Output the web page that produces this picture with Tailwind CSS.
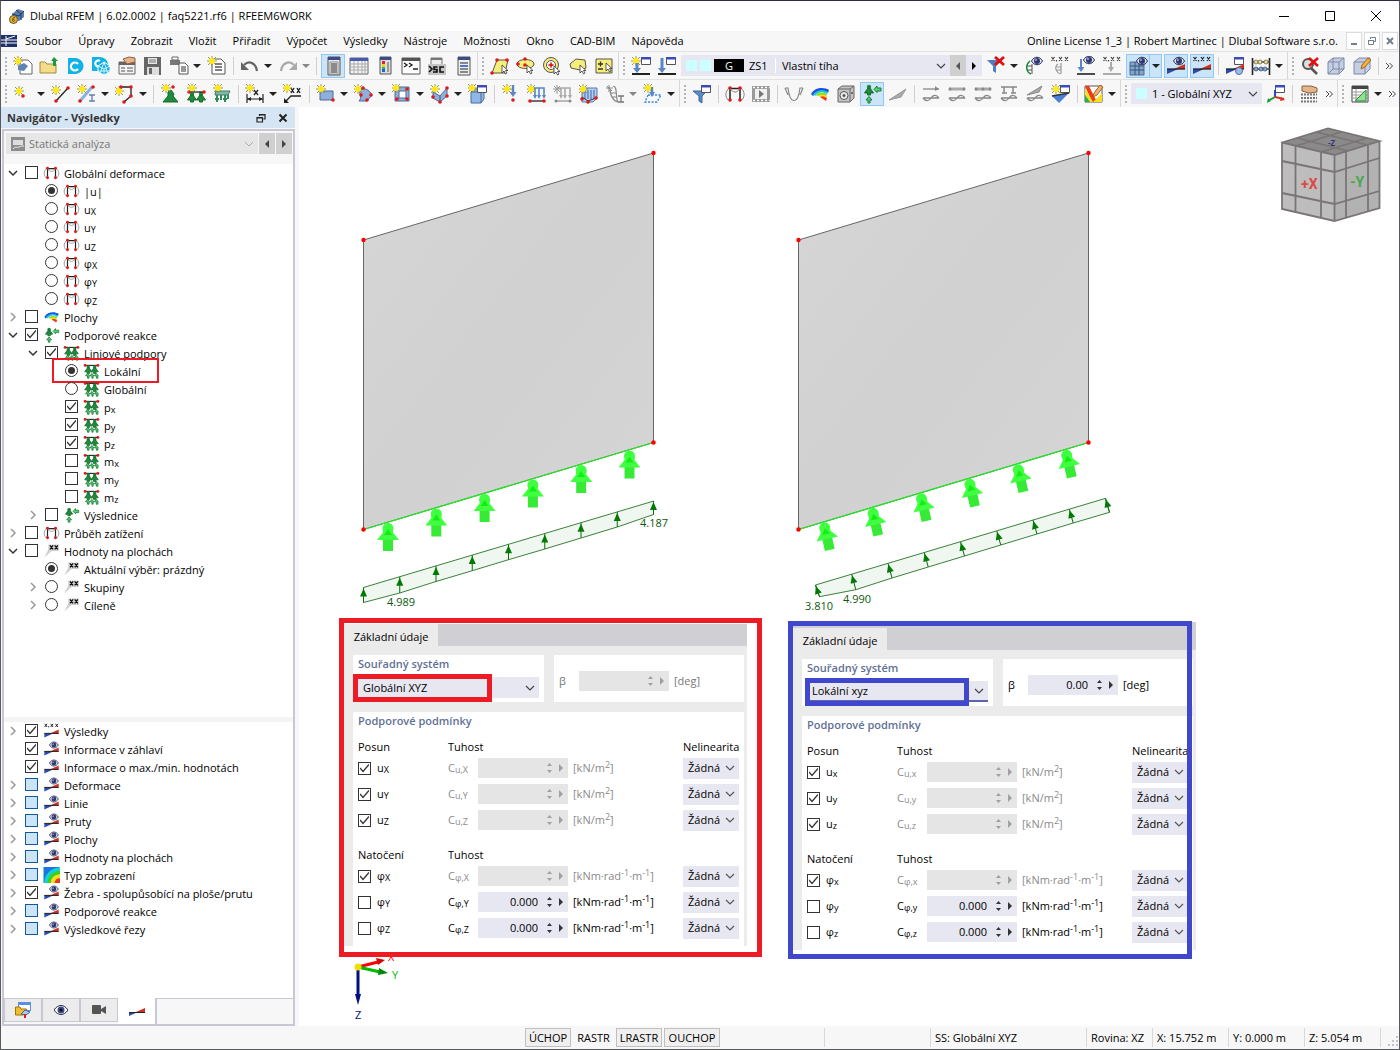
<!DOCTYPE html>
<html lang="cs">
<head>
<meta charset="utf-8">
<title>Dlubal RFEM</title>
<script src="https://cdn.jsdelivr.net/npm/@tailwindcss/browser@4"></script>
</head>
<body class="bg-white">
<div class="flex h-screen flex-col overflow-hidden border border-[#5a5a64] border-t-[#2b2b4a] bg-[#f7f7f7] font-['Open_Sans','Noto_Sans',sans-serif] text-[11px] leading-4 text-black">

  <header class="flex h-[30px] shrink-0 items-center bg-white">
    <svg class="ml-2 h-4 w-4" viewBox="0 0 16 16"><path d="M3 6 9 1l6 2v6l-5 4-6-2z" fill="#5b7fae"/><path d="M3 6l7 2 5-5M7 2l5 4v6" fill="none" stroke="#23395d"/><circle cx="4.500" cy="11.500" r="4" fill="#e3b23c" stroke="#6b5518"/><path d="M6 9.500C3 9 3 13.500 4.500 13.500S6 11 3.500 11.500" fill="none" stroke="#6b4a00"/></svg>
    <h1 class="ml-[5px] text-[11px]">Dlubal RFEM | 6.02.0002 | faq5221.rf6 | RFEEM6WORK</h1>
    <div class="ml-auto flex">
      <button aria-label="Minimalizovat" class="grid w-[46px] place-items-center"><svg class="h-3 w-3" viewBox="0 0 12 12"><path d="M1 6.500h10" stroke="#000"/></svg></button>
      <button aria-label="Maximalizovat" class="grid w-[46px] place-items-center"><svg class="h-3 w-3" viewBox="0 0 12 12"><path d="M1.500 1.500h9v9h-9z" fill="none" stroke="#000"/></svg></button>
      <button aria-label="Zavřít" class="grid w-[46px] place-items-center"><svg class="h-3 w-3" viewBox="0 0 12 12"><path d="m1 1 10 10M11 1 1 11" stroke="#000"/></svg></button>
    </div>
  </header>

  <nav class="flex h-5 shrink-0 items-center">
    <svg class="h-3 w-4" viewBox="0 0 16 12"><path fill="#1f2f6b" d="M0 0h16v12H0z"/><path d="M0 5h16M0 8h16M5 1v10M5 4l9-3" fill="none" stroke="#fff"/></svg>
    <div id="menu" class="ml-2 flex gap-4"></div>
    <span class="ml-auto">Online License 1_3 | Robert Martinec | Dlubal Software s.r.o.</span>
    <div class="ml-2 mr-px flex gap-0.5">
      <button aria-label="Minimalizovat okno" class="grid h-[18px] w-4 place-items-center border border-[#dcdcdc] bg-white"><svg class="h-2.5 w-2.5" viewBox="0 0 10 10"><path d="M2 8h6" stroke="#70808c" stroke-width="2"/></svg></button>
      <button aria-label="Obnovit okno" class="grid h-[18px] w-4 place-items-center border border-[#dcdcdc] bg-white"><svg class="h-2.5 w-2.5" viewBox="0 0 10 10"><path d="M1.500 4.500h5v4h-5zM1 4.500h6M3.500 3V1.500h5v4H7" fill="none" stroke="#70808c"/></svg></button>
      <button aria-label="Zavřít okno" class="grid h-[18px] w-4 place-items-center border border-[#dcdcdc] bg-white"><svg class="h-2.5 w-2.5" viewBox="0 0 10 10"><path d="m2 2 6 6M8 2 2 8" stroke="#70808c" stroke-width="2"/></svg></button>
    </div>
  </nav>

  <div id="bar1" role="toolbar" class="flex h-7 shrink-0 items-center gap-0.5 overflow-hidden border-t border-[#e2e2e2]"></div>
  <div id="bar2" role="toolbar" class="flex h-7 shrink-0 items-center gap-0.5 overflow-hidden border-t border-[#e2e2e2]"></div>

  <div class="flex min-h-0 flex-1">
    <aside class="mr-1 flex w-[294px] shrink-0 flex-col">
      <div class="flex h-[21px] shrink-0 items-center bg-[#d6e5f3] pl-1.5 font-bold text-[#333]">
        <h2>Navigátor - Výsledky</h2>
        <button aria-label="Uvolnit panel" class="ml-auto mr-3"><svg class="h-2.5 w-2.5" viewBox="0 0 10 10"><path d="M1 4.500h5.500V9H1zM1 5h5.500M3.500 3V1.500H9V6H7.500M3 2h6" fill="none" stroke="#222" stroke-width="1.200"/></svg></button>
        <button aria-label="Zavřít panel" class="mr-[7px]"><svg class="h-2.5 w-2.5" viewBox="0 0 10 10"><path d="m1.500 1.500 7 7M8.500 1.500l-7 7" stroke="#222" stroke-width="2"/></svg></button>
      </div>
      <div class="ml-px mt-px flex min-h-0 flex-1 flex-col border-2 border-[#c8c8d4] bg-white">
        <div class="flex h-[33px] shrink-0 items-start gap-px bg-[#f7f7f7] pl-0.5 pr-px pt-0.5 text-[#777]">
          <div class="flex h-[21px] flex-1 items-center bg-[#e6e6e6] px-[5px]">
            <svg class="h-3.5 w-3.5" viewBox="0 0 14 14"><path fill="#8c8c8c" d="M0 0h14v14H0z"/><path fill="#ddd" d="M2 3h10v5H2z"/><path d="M2 12c2-3 4-1 6-2s3-1 5-1" fill="none" stroke="#eee"/></svg>
            <select aria-label="Typ analýzy" disabled class="ml-1 flex-1 appearance-none bg-transparent text-[#777] opacity-100"><option>Statická analýza</option></select>
            <svg class="h-2 w-2" viewBox="0 0 8 8"><path d="m0 2 4 4 4-4" fill="none" stroke="#aaa"/></svg>
          </div>
          <button aria-label="Předchozí" class="grid h-[21px] w-4 place-items-center bg-[#d0d0d0]"><svg class="h-2 w-2" viewBox="0 0 8 8"><path d="M6 0v8L2 4z" fill="#444"/></svg></button>
          <button aria-label="Další" class="grid h-[21px] w-4 place-items-center bg-[#d0d0d0]"><svg class="h-2 w-2" viewBox="0 0 8 8"><path d="M2 0v8l4-4z" fill="#444"/></svg></button>
        </div>
        <div id="tree1" role="tree" class="min-h-0 flex-1 overflow-hidden"></div>
        <div class="h-[5px] shrink-0 bg-[#f4f4f4]"></div>
        <div id="tree2" role="tree" class="h-[276px] shrink-0 overflow-hidden"></div>
        <div class="flex h-[26px] shrink-0 bg-[#f7f7f7]">
          <button aria-label="Data" class="grid h-6 w-[38px] place-items-center border border-[#c8c8d4] bg-[#ececec]"><svg class="h-4 w-4" viewBox="0 0 16 16"><path fill="#5b8fe0" d="M3 0h13v9H3z"/><path fill="#fff" d="M4 3h11v5H4z"/><path d="M.5 5V13h8l3-6H6L5 5z" fill="#f2bd2c" stroke="#a67300"/><path d="m6 12 4-4 5 2-4 3z" fill="#a9c9ee" stroke="#46638f"/><path d="M10 12v4" stroke="#e02020" stroke-width="2"/></svg></button>
          <button aria-label="Zobrazit" class="grid h-6 w-[38px] place-items-center border border-[#c8c8d4] bg-[#ececec]"><svg class="h-3 w-3.5" viewBox="0 0 14 12"><path d="M0 6c4-6 10-6 14 0-4 6-10 6-14 0z" fill="#fff" stroke="#23284c"/><circle cx="7" cy="6" r="3.500" fill="#3e4a86"/><circle cx="7" cy="6" r="1.500" fill="#111"/></svg></button>
          <button aria-label="Pohledy" class="grid h-6 w-[38px] place-items-center border border-[#c8c8d4] bg-[#ececec]"><svg class="h-3 w-4" viewBox="0 0 16 12"><rect y="1" x="1" width="9" height="9" rx="1" fill="#555"/><path d="m10 5 5-3v8l-5-3z" fill="#555"/></svg></button>
          <button aria-label="Výsledky" class="grid h-[26px] w-[39px] place-items-center border-r-2 border-[#c8c8d4] bg-white"><svg class="h-3 w-4" viewBox="0 0 16 12"><path d="M0 7h9L0 11z" fill="#2a4bb5"/><path d="M16 3v4H7z" fill="#d23020"/><path d="M0 7.500h16" stroke="#222"/></svg></button>
          <div class="flex-1 border-t border-[#c8c8d4]"></div>
        </div>
      </div>
    </aside>

    <main id="canvas" class="relative min-w-0 flex-1 overflow-hidden bg-white"></main>
  </div>

  <footer class="flex h-[23px] shrink-0 items-center whitespace-nowrap">
    <div class="ml-[524px] flex items-center gap-0.5">
      <button class="h-[19px] w-[46px] border border-[#c0c0c0] bg-[#efefef]">ÚCHOP</button>
      <button class="h-[19px] w-[41px]">RASTR</button>
      <button class="h-[19px] w-[46px] border border-[#c0c0c0] bg-[#efefef]">LRASTR</button>
      <button class="h-[19px] w-[56px] border border-[#c0c0c0] bg-[#efefef]">OUCHOP</button>
    </div>
    <div class="ml-auto flex leading-[19px]">
      <span class="w-[106px] border-l border-[#d8d8d8]"></span>
      <span class="w-[156px] border-l border-[#d8d8d8] pl-1">SS: Globální XYZ</span>
      <span class="w-[66px] border-l border-[#d8d8d8] pl-1">Rovina: XZ</span>
      <span class="w-[76px] border-l border-[#d8d8d8] pl-1">X: 15.752 m</span>
      <span class="w-[76px] border-l border-[#d8d8d8] pl-1">Y: 0.000 m</span>
      <span class="w-[76px] border-l border-[#d8d8d8] pl-1">Z: 5.054 m</span>
      <span class="grid w-[19px] items-end justify-end border-l border-[#d8d8d8]"><svg class="h-3 w-3" viewBox="0 0 12 12"><path d="M9 9h2v2H9zM5 9h2v2H5zM1 9h2v2H1zM9 5h2v2H9zM5 5h2v2H5zM9 1h2v2H9z" fill="#c4c4c4"/></svg></span>
    </div>
  </footer>
</div>

<script>
const $ = id => document.getElementById(id);

/* Shared glyph parts */
const star = (x, y) => `<g transform="translate(${x} ${y})"><path d="M0-5V5M-5 0H5M-4-4 4 4M4-4-4 4" stroke="#8f8a3c" stroke-width=".9"/><circle r="3" fill="#ffe81a"/></g>`;
const dot = (...p) => { let s = ''; for (let i = 0; i < p.length; i += 2) s += `<circle cx="${p[i]}" cy="${p[i+1]}" r="1.800" fill="#e01818"/>`; return s; };
const gdot = (...p) => { let s = ''; for (let i = 0; i < p.length; i += 2) s += `<circle cx="${p[i]}" cy="${p[i+1]}" r="1.500" fill="#888"/>`; return s; };
const eye = (x, y) => `<g transform="translate(${x} ${y})"><path d="M-5.500 0C-3-5 3-5 5.500 0 3 5-3 5-5.500 0z" fill="#dfe3f2" stroke="#23284c"/><circle r="3" fill="#2c3870"/><circle cx="-1" cy="-1" r="1" fill="#9fb0e0"/></g>`;
const win = (x, y) => `<g transform="translate(${x} ${y})"><path d="M.5.500h9v7h-9z" fill="#fff" stroke="#555"/><path d="M0 0h10v2.500H0z" fill="#3b4cb8"/></g>`;
const line = (d, c = '#222', w = 1.3) => `<path d="${d}" fill="none" stroke="${c}" stroke-width="${w}"/>`;
const fill = (d, c, s = 'none') => `<path d="${d}" fill="${c}" stroke="${s}"/>`;
const xmarks = (y, c = '#222') => `<path d="m1.500 ${y} 3 4M4.500 ${y}l-3 4M9 ${y}l3 4M12 ${y}l-3 4M15 ${y}l3 4M18 ${y}l-3 4M6.500 ${y+3}v1.500" fill="none" stroke="${c}" stroke-width="1.200"/>`;
const post = (x, y) => `<circle cx="${x}" cy="${y+1}" r="2.200" fill="#1f8a3c"/>` + fill(`M${x-1} ${y+2}h2l3.500 5H${x+1.5}v2h-3v-2H${x-4.5}z`, '#1f8a3c', '#146a2c');
const diagram = fill('M1 13h11L1 18z', '#2a4bb5') + fill('M19 8v5H8z', '#d23020') + line('M1 13h18');
const cursor = (x, y) => `<path transform="translate(${x} ${y})" d="M0 0v8l2-2 1.500 3 1.500-1-1.500-2.500H6z" fill="#fff" stroke="#333" stroke-width=".8"/>`;
const blueSurf = d => fill(d, '#8fb0dc', '#4d6b96');
const rainbow = fill('M1 10C5 3 14 3 19 6l-1 3C12 5 7 7 3 12z', '#1d4fe0') + fill('M3 10c4-4 10-5 15-2l-1 2C12 7 8 8 5 12z', '#18c8e0') + fill('M6 11c3-3 7-3 11-1l-1 3-4-2-5 1z', '#8be020') + fill('M8 12c3-2 6-1 9 0l-1 2-5-1z', '#f5e020') + fill('M10 13c3-1 5 0 7 1l-1 3z', '#ef3a1a');

const icons = {
  new: fill('M7 4h8l4 4v10H7z', '#fff', '#666') + star(5, 5) + fill('m5 10 6-3 4 3-4 5-6-1z', '#5f83b5'),
  open: fill('M1 6h5l2 2h9v9H1z', '#f3dd8b', '#a08a3a') + fill('M15 1l4 4h-2v5h-3V5h-2z', '#1d9a3a'),
  c: fill('M3 2h8c10 2 10 14 0 16H3z', '#11b3e6') + line('M13 8a4 4 0 1 0 0 5', '#fff', 2.2),
  cglobe: fill('M1 1h8c6 1 8 4 8 8l-6 6H1z', '#11b3e6') + line('M9 5a3 3 0 1 0 0 5', '#fff', 2) + fill('m7 10 6-4 6 4v6l-6 3-6-3z', '#11b3e6', '#fff') + line('m7 10 6 3 6-3M13 13v6M9 18l4-12 4 12M7 15h12', '#fff', .8),
  props: fill('M2 6h16v12H2z', '#f4f4f4', '#666') + fill('M2 6h16v3H2z', '#666') + line('M4 12h4M10 12h6M4 15h4M10 15h6', '#888') + fill('M6 3l6-2 6 1v4l-8 2z', '#e4b48c', '#8c623c'),
  save: fill('M1 1h17v18H1z', '#666') + fill('M5 2h9v6H5z', '#e8e8e8') + fill('M4 11h12v8H4z', '#ddd') + fill('M6 12h3v6H6z', '#666') + line('M6 4h7M6 6h7', '#999'),
  print: fill('M1 4h10v5H1z', '#777') + fill('M3 1h6v3H3z', '#fff', '#666') + fill('M10 7h6l3 3v8h-9z', '#fff', '#555') + line('M12 11h5M12 13h5M12 15h5', '#777'),
  list: fill('M5 3h9l4 4v11H5z', '#fff', '#555') + line('M8 8h7M8 11h7M8 14h7', '#555') + star(5, 5),
  undo: line('M4 9c5-5 12-2 13 6', '#666', 2.2) + fill('M1 6v8h8z', '#666'),
  redo: line('M16 9C11 4 4 7 3 15', '#aaa', 2.2) + fill('M19 6v8h-8z', '#aaa'),
  panel: fill('M5 1h12v18H5z', '#e8e8e8', '#555') + fill('M5 1h12v3H5z', '#3e4a8a') + fill('M7 6h8v12H7z', '#fff', '#888') + line('M8 8h6M8 10h6M8 12h6M8 14h6M8 16h6', '#666'),
  grid: fill('M1 2h18v16H1z', '#f4f4f4', '#666') + fill('M1 2h18v3H1z', '#4a5ab0') + line('M1 8h18M1 11h18M1 14h18M5 5v13M9 5v13M13 5v13M16 5v13', '#aaa', 1),
  colors: fill('M5 1h11v17H5z', '#ddd', '#555') + fill('M5 1h11v3H5z', '#3e4a8a') + fill('M7 5h3v3H7z', '#e02020') + fill('M7 8h3v3H7z', '#f0d020') + fill('M7 11h3v2H7z', '#20c040') + fill('M7 13h3v3H7z', '#2060e0') + line('M13 6v10', '#777'),
  console: fill('M1 2h18v16H1z', '#fff', '#555') + fill('M1 2h18v3H1z', '#555') + line('m3 7 3 2-3 2M8 7l3 2-3 2M12 13h5', '#222', 1.4),
  sc: fill('M4 2h11v7H4z', '#eee', '#777') + fill('M4 2h11v2H4z', '#777') + fill('M1 8h18v11H1z', '#c4c4c4') + line('m2 10 3 3-3 3M10.500 11H7v2.500h3V16H6M17 11h-4v5h4', '#111', 1.6),
  listwin: fill('M5 1h12v18H5z', '#eee', '#555') + fill('M5 1h12v3H5z', '#3e4a8a') + line('M7 7h8M7 13h8M7 16h8', '#666') + line('M7 10h8', '#4a78d0', 2),
  selpoly: fill('M2 17 7 4h11l-3 13z', '#f7ee7a', '#555') + dot(7, 4, 17, 4, 2, 17) + cursor(12, 9),
  selell: fill('M1 8c0-6 17-6 17 0s-17 6-17 0z', '#f7ee7a', '#555') + dot(9, 3, 2, 8, 9, 9) + cursor(11, 9),
  selcirc: '<circle cx="9" cy="9" r="7.500" fill="#f7ee7a" stroke="#555"/><circle cx="9" cy="9" r="4.500" fill="#fff" stroke="#555"/>' + dot(9, 9) + line('M9 6v6M6 9h6', '#e01818', 1) + cursor(12, 10),
  selfree: fill('M2 8 8 3l9 1 1 8-6 2-9-2z', '#f7ee7a', '#555') + cursor(12, 9),
  selpm: fill('M2 3h16v14H2z', '#f7ee7a', '#555') + line('M4 8h5M6.500 5.500v5M4 13h5', '#333') + cursor(12, 7),
  loadnew: win(10, 1) + star(5, 5) + line('M6 7v8', '#5a86c8', 3) + fill('M2 12h8l-4 5z', '#5a86c8') + line('M1 18h18', '#222', 2),
  load: win(9, 1) + line('M5 2v11', '#5a86c8', 3) + fill('M1 12h8l-4 5z', '#5a86c8') + line('M1 18h18', '#222', 2),
  filterx: fill('M1 4h14l-5 6v7l-3-2v-5z', '#4d7fc0') + line('m9 1 9 8M18 1 9 9', '#e01010', 2.8),
  eyecurve: eye(13, 5) + line('M6 5c-5 4-4 11 1 13', '#1a8a3a', 1.6) + line('M8 8v10M3 10h5M3 14h5', '#555', 1),
  xxxcurve: xmarks(1, '#444') + line('M8 8c-4 3-2 8 2 10M11 7v11M7 11h4M7 14h4', '#999', 1.2),
  loadeye: eye(13, 4) + line('M5 3v10', '#5a86c8', 2) + fill('M1.500 11h7l-3.500 5z', '#5a86c8') + line('M1 18h18', '#222', 1.6),
  xxxload: xmarks(1, '#444') + line('M9 6v6', '#aaa', 2) + fill('M6 11h6l-3 5z', '#aaa') + line('M1 18h18', '#999', 1.6),
  grideye: fill('M2 6h14v13H2z', '#86a6c8', '#4d6b96') + line('M2 10h14M2 14h14M7 6v13M11 6v13', '#34577f', 1) + eye(14, 5),
  diageye: diagram + eye(13, 5),
  diagxxx: xmarks(1) + diagram,
  diagwin: win(9, 1) + diagram + '<circle cx="14" cy="15" r="3.500" fill="#9db9e8" stroke="#5572b8"/>',
  abacus: line('M1.500 2v17M18.500 2v17', '#222', 1.6) + line('M1 6h18M1 13h18', '#444') + '<g fill="#f2e08a" stroke="#555" stroke-width=".7"><circle cx="5" cy="6" r="2"/><circle cx="9" cy="6" r="2"/><circle cx="15" cy="6" r="2"/></g><g fill="#7fa5e0" stroke="#345" stroke-width=".7"><circle cx="5" cy="13" r="2"/><circle cx="10" cy="13" r="2"/><circle cx="14" cy="13" r="2"/></g>',
  findx: '<circle cx="8" cy="8" r="5" fill="#ddd" stroke="#555" stroke-width="2"/>' + line('m11 12 6 6', '#555', 2.6) + line('m9 2 9 8M18 2 9 10', '#e01010', 2.6),
  cube: fill('M2 6l5-4h11v11l-5 5H2z', '#c6cfe2', '#7c88a8') + line('M2 6h11v12M13 6l5-4M7 2v11h11M7 13l-5 5', '#7c88a8', 1),
  cubepen: fill('M2 6l5-4h11v11l-5 5H2z', '#c6cfe2', '#7c88a8') + line('M2 6h11v12M13 6l5-4', '#7c88a8', 1) + fill('m9 13 1-4 6-7 3 2-6 7z', '#f2b040', '#a06a20'),

  node: star(6, 7) + dot(10, 12),
  line: line('M5 17 17 4') + star(5, 6) + dot(5, 17, 17, 4),
  member: line('M3 17 15 3', '#8fb0dc', 3) + star(5, 5) + dot(3, 17, 16, 3) + line('M12 11h6M15 11v6M12 17h6', '#667fa8', 1.4),
  poly: line('M5 3h11v9l-7 6') + star(4, 7) + dot(6, 3, 16, 3, 16, 12, 9, 18),
  supp1: fill('M11 6l3 4-1 2 5 6H3l5-6V8z', '#1f8a3c', '#146a2c') + star(6, 4) + dot(13, 3),
  supp2: post(6, 9) + post(15, 9) + line('M3 8h15') + dot(3, 8, 18, 8) + star(6, 4),
  supp3: fill('M4 7h14l-2 4H3z', '#7fb8a8', '#3d7a68') + line('M5 11v7M9 11v5M13 11v7M16 11v4M3 15h4M11 15h4', '#2f8a5c', 2) + star(6, 4),
  dim: line('M2 10v9M18 10v9M2 15h16', '#222', 1.2) + fill('M2 15l4-2v4zM18 15l-4-2v4z', '#222') + line('m9 6 4 5M13 6l-4 5') + star(5, 4),
  xx: line('M18 12H8L2 18') + fill('M1 19v-5l5 5z', '#222') + line('m8 4 3 5M11 4 8 9M14 4l3 5M17 4l-3 5', '#222', 1.4) + star(4, 4),
  surf: blueSurf('M4 7h13v9H4z') + star(5, 5) + dot(17, 16),
  surf2: blueSurf('M5 6c4-3 10-1 13 5l-5 6H5c3-3 1-7 0-11z') + star(4, 5) + dot(9, 4, 17, 11, 13, 16, 7, 11),
  opening: fill('M3 3h14v14H3z', '#8fb0dc', '#4d6b96') + fill('M7 7h7v7H7z', '#fff', '#4d6b96') + star(4, 4) + dot(15, 5, 5, 15, 15, 15),
  solid: blueSurf('M3 8l7 4 7-8v8l-7 6-7-4z') + line('M10 12v6', '#4d6b96') + star(5, 5) + dot(17, 4, 17, 12, 10, 18, 3, 13),
  solidwin: fill('M3 8l3-3h10v10l-3 4H3z', '#8fb8e8', '#4d6b96') + line('M3 8h10v11M13 8l3-3', '#4d6b96', 1) + win(9, 1) + star(4, 4),
  nload: star(6, 5) + line('M12 1v8', '#5a86c8', 2.4) + fill('M8.500 8h7L12 13z', '#5a86c8') + dot(12, 16),
  lload: line('M4 4h13v8M8 4v8M12 4v8', '#5a86c8', 1.6) + fill('M6 11h4l-2 4zM10 11h4l-2 4zM15 11h4l-2 4z', '#5a86c8') + star(4, 5) + line('M3 17h14') + dot(3, 17, 17, 17),
  lload2: line('M4 4h13v8M8 4v8M12 4v8', '#aaa', 1.6) + fill('M6 11h4l-2 4zM10 11h4l-2 4zM15 11h4l-2 4z', '#aaa') + line('M4 1v9M0 5h8M1 2l6 6M7 2 1 8', '#999', 1) + line('M3 17h14', '#999') + gdot(3, 17, 17, 17),
  sload: fill('M3 8l3-4h12v10l-4 4H3z', '#b7cdea', '#5a78a8') + line('M6 6v9M9 6v9M12 6v9M15 6v9', '#5a86c8', 1.4) + star(4, 5) + line('M3 13l6 4 8-3', '#333', 1) + dot(3, 15, 9, 18, 17, 14),
  sec: line('M8 2c5 0 2 11 5 16M5 5c0 6 3 12 8 13M6 9h5M7 13h5', '#888', 1.2) + line('M4 1v7M1 4h7M2 2l5 5', '#888', 1) + line('M13 12h6M16 12v6M13 18h6', '#777', 1.3),
  free: '<path d="M5 11h13l-4 7H2z" fill="none" stroke="#2f8ae0" stroke-width="1.400" stroke-dasharray="2 1.500"/>' + line('M9 3v6', '#5a86c8', 2.4) + fill('M6 8h6l-3 5z', '#5a86c8') + star(5, 4),
  funnel: fill('M1 7h14l-5 5v7l-3-2v-5z', '#5a8ac8', '#3d66a0') + win(9, 1),
  defo: line('M5 4.500h10M5 4v12M15 4v12', '#222', 1.5) + line('M5 5c4 4 6 4 10 0M4 4C0 8 0 12 3 16M16 4c4 4 4 8 1 12', '#888', 1) + dot(5, 4, 15, 4, 5, 16, 15, 16),
  film: fill('M1 2h18v16H1z', '#999') + fill('M4 5h12v10H4z', '#f0f0f0') + fill('m8 6 5 4-5 4z', '#777') + '<path d="M2 3.500h17M2 16.500h17" stroke="#fff" stroke-width="1.500" stroke-dasharray="2 2"/>',
  curve: line('M1 4h3c2 17 10 17 12 0h3M1 4l3 7M19 4l-3 7', '#888', 1.2),
  rainbow,
  die: fill('M2 5l4-3h12v12l-4 4H2z', '#c4c4c4', '#666') + line('M2 5h12v13M14 5l4-3', '#666', 1) + '<circle cx="8" cy="11.500" r="4" fill="#eee" stroke="#555"/><circle cx="8" cy="11.500" r="1.500" fill="#555"/><circle cx="16" cy="9" r="1" fill="#555"/>',
  react: post(7, 2) + fill('M19 4h-4V2l-3 3.500 3 3V7h4z', '#4fd472', '#1b7a35') + fill('M6 19v-3H4l3-3.500 3 3.500H8v3z', '#4fd472', '#1b7a35'),
  wedge: fill('M1 16 18 5l-5 8z', '#aaa', '#999'),
  r1: line('M2 5h16', '#888', 1.3) + fill('M14 2l4 3-4 2z', '#888') + line('M2 14h16M2 14c3 4 6 3 8 0s5-4 8 0', '#888'),
  r2: line('M2 5h16', '#aaa', 3) + gdot(3, 5, 17, 5) + line('M2 14h16M2 14c3 4 6 3 8 0s5-4 8 0', '#888'),
  r3: line('M2 5h16', '#aaa', 3) + gdot(3, 5, 10, 5, 17, 5) + line('M2 14h16M2 14c3 4 6 3 8 0s5-4 8 0', '#888'),
  r4: line('M2 3h16M5 3v6M14 3v6M3 9h5M12 9h5', '#888', 1.5) + line('M2 14h16M2 14c3 4 6 3 8 0s5-4 8 0', '#888'),
  r5: fill('M2 11 17 2l-3 6z', '#aaa', '#888') + line('M2 14h16M2 14c3 4 6 3 8 0s5-4 8 0', '#888'),
  starwin: win(9, 1) + star(5, 5) + fill('M1 12 18 9 8 19z', '#4d7fd8') + line('M1 12 18 9', '#333'),
  pens: fill('M1 2h17v16H1z', '#fff', '#555') + fill('M1 2h4l8 16H8z', '#ef3a1a') + fill('M1 4l8 14H5L1 11z', '#f5e020') + fill('M1 11l5 7H1z', '#22b14c') + fill('M9 13l1-4 6-8 3 2-6 8z', '#f2b070', '#a06a20') + fill('M9 18l9-9v9z', '#f5e020'),
  axes: win(9, 1) + line('M9 13V6', '#2a4bb5', 2) + line('M9 13l9 2', '#e03020', 2) + line('M9 13l-7 4', '#1d9a3a', 2) + fill('M1 19l1-5 3 3z', '#1d9a3a') + fill('M19 16l-4-3-1 4z', '#e03020'),
  hand: fill('M3 2h9l6 2v4l-8 1-7-2z', '#e4b48c', '#8c623c') + '<path d="M2 10.500h16M2 14h16M2 17.500h16" stroke="#777" stroke-width="2" stroke-dasharray="2 1"/>',
  table: fill('M2 2h16v16H2z', '#fff', '#444') + fill('M2 2h16v3H2z', '#444') + line('M2 8h16M2 11h16M2 14h16M6 5v13', '#999', 1) + fill('M5 17 16 6v11z', '#8fe08f', '#2a8a3a'),

  /* navigator tree */
  linesupp: line('M2 3h16', '#222', 1.4) + post(6, 4) + post(14, 4) + fill('M5 19v-3H2.500L5 13l2.500 3H7v3zM10.500 19v-3H8l2.500-3 2.500 3h-1v3zM16 19v-3h-2.500l2.500-3 2.500 3H18v3z', '#4fd472', '#1b7a35') + dot(2, 3, 18, 3),
  flag: fill('M6 2h13v8H10l-9 8 5-10z', '#cfcfcf') + line('m8 3 4 5M12 3 8 8M14 3l4 5M18 3l-4 5', '#111', 1.6),
  heat: fill('M0 0h20v20H0z', '#1878e0') + '<circle cx="20" cy="20" r="19" fill="#18d0d8"/><circle cx="20" cy="20" r="15" fill="#3ad020"/><circle cx="20" cy="20" r="11" fill="#f5e020"/><circle cx="20" cy="20" r="6" fill="#e83a1a"/>',
};
const svg20 = n => `<svg class="h-5 w-5" viewBox="0 0 20 20">${icons[n]}</svg>`;
const svg16 = n => `<svg class="h-4 w-[17px] shrink-0 overflow-hidden" viewBox="0 0 20 20">${icons[n]}</svg>`;

/* Toolbars: "|" separator, "v" caret, ":" handle, ">>" overflow, "*name" pressed */
const chevron = c => `<svg class="pointer-events-none col-start-1 row-start-1 mr-1 h-2.5 w-2.5 justify-self-end" viewBox="0 0 10 10"><path d="m1 3 4 4 4-4" fill="none" stroke="${c}" stroke-width="1.200"/></svg>`;
const loadCombo = `<div class="flex h-[21px] w-[301px] shrink-0 items-center">
  <div class="flex h-[21px] flex-1 items-center bg-[#e7e7f2] pl-[5px]">
    <span class="h-[11px] w-[11px] bg-[#ccffff]"></span><span class="ml-[3px] h-[11px] w-[11px] bg-[#ccffff]"></span>
    <span class="ml-[3px] h-[13px] w-[30px] bg-black text-center leading-[13px] text-white">G</span>
    <span class="ml-[5px] w-[26px]">ZS1</span><span class="h-[15px] w-px bg-white"></span>
    <span class="grid flex-1 items-center"><select aria-label="Zatěžovací stav" class="col-start-1 row-start-1 appearance-none bg-transparent pl-1.5"><option>Vlastní tíha</option></select>${chevron('#444')}</span>
  </div>
  <button aria-label="Předchozí zatěžovací stav" class="grid h-[21px] w-4 place-items-center bg-[#cfcfcf]"><svg class="h-2 w-2" viewBox="0 0 8 8"><path d="M6 0v8L2 4z" fill="#555"/></svg></button>
  <button aria-label="Další zatěžovací stav" class="grid h-[21px] w-4 place-items-center bg-[#e7e7f2]"><svg class="h-2 w-2" viewBox="0 0 8 8"><path d="M2 0v8l4-4z" fill="#000"/></svg></button>
</div>`;
const csCombo = `<div class="flex h-[21px] w-[131px] shrink-0 items-center bg-[#e7e7f2] pl-[5px]">
  <span class="h-[11px] w-[11px] bg-[#ccffff]"></span>
  <span class="grid flex-1 items-center"><select aria-label="Souřadný systém" class="col-start-1 row-start-1 w-full appearance-none bg-transparent pl-[5px]"><option>1 - Globální XYZ</option></select>${chevron('#444')}</span></div>`;
const tool = t => {
  if (t === '|') return '<span class="grid h-[18px] w-[5px] shrink-0 justify-center"><span class="h-full w-px bg-[#d0d0d0]"></span></span>';
  if (t === 'v' || t === 'vg') return `<button aria-label="Více" class="-ml-0.5 grid h-6 w-3 shrink-0 place-items-center"><svg class="h-1 w-2" viewBox="0 0 8 4"><path d="M0 0h8L4 4z" fill="${t === 'v' ? '#222' : '#888'}"/></svg></button>`;
  if (t === 'V') return '<button aria-label="Více" class="-ml-0.5 grid h-6 w-3 shrink-0 place-items-center border border-l-0 border-[#90c8f6] bg-[#cce4f7]"><svg class="h-1 w-2" viewBox="0 0 8 4"><path d="M0 0h8L4 4z" fill="#222"/></svg></button>';
  if (t === ':' || t === '::') return `<span class="${t === ':' ? 'grid h-7 w-[9px] shrink-0 items-center justify-end border-l border-[#d8d8d8] pr-0.5' : 'grid h-7 w-2 shrink-0 items-center justify-end pr-0.5'}"><svg class="h-[18px] w-0.5" viewBox="0 0 2 18"><path d="M1 0v18" stroke="#b4b4b4" stroke-width="2" stroke-dasharray="2 2"/></svg></span>`;
  if (t === '>>') return '<button aria-label="Další nástroje" class="grid h-6 w-3 shrink-0 place-items-center"><svg class="h-2 w-2" viewBox="0 0 8 8"><path d="m1 1 3 3-3 3M4.500 1l3 3-3 3" fill="none" stroke="#444"/></svg></button>';
  if (t === '@load') return loadCombo;
  if (t === '@cs') return csCombo;
  if (t[0] === '*') return `<button aria-label="${t.slice(1)}" class="grid h-6 w-6 shrink-0 place-items-center border border-[#90c8f6] bg-[#cce4f7]">${svg20(t.slice(1))}</button>`;
  return `<button aria-label="${t}" class="grid h-6 w-6 shrink-0 place-items-center">${svg20(t)}</button>`;
};
$('bar1').innerHTML = ':: new open c cglobe props save print v list | undo v redo vg | *panel grid colors console sc listwin : selpoly selell selcirc selfree selpm : loadnew load @load filterx v eyecurve xxxcurve loadeye xxxload *grideye V *diageye *diagxxx | diagwin abacus v : findx cube cubepen | >>'.split(' ').map(tool).join('');
$('bar2').innerHTML = ':: node v line member v poly v | supp1 supp2 supp3 | dim v xx | surf v surf2 v opening v solid v solidwin | nload lload lload2 sload sec vg free v : funnel | defo film | curve rainbow die *react wedge | r1 r2 r3 r4 r5 starwin | pens v : @cs axes | hand >> : table v >>'.split(' ').map(tool).join('');
$('menu').innerHTML = ['Soubor', 'Úpravy', 'Zobrazit', 'Vložit', 'Přiřadit', 'Výpočet', 'Výsledky', 'Nástroje', 'Možnosti', 'Okno', 'CAD-BIM', 'Nápověda'].map(m => `<button>${m}</button>`).join('');

/* Tick boxes and radios */
const tick = '<svg class="pointer-events-none col-start-1 row-start-1 h-[9px] w-[9px] opacity-0 peer-checked:opacity-100" viewBox="0 0 9 9"><path d="m0 4 3 3.500L9 .5" fill="none" stroke="#333" stroke-width="1.300"/></svg>';
const bullet = '<svg class="pointer-events-none col-start-1 row-start-1 h-[7px] w-[7px] opacity-0 peer-checked:opacity-100" viewBox="0 0 8 8"><circle cx="4" cy="4" r="4" fill="#333"/></svg>';
const box = (id, on, blue) => `<span class="grid shrink-0 place-items-center"><input id="${id}" type="checkbox" ${on ? 'checked' : ''} class="${blue ? 'peer col-start-1 row-start-1 h-[13px] w-[13px] appearance-none border border-[#0e5aa0] bg-[#cce4f7]' : 'peer col-start-1 row-start-1 h-[13px] w-[13px] appearance-none border border-[#333] bg-white'}">${tick}</span>`;
const radio = (id, name, on) => `<span class="grid shrink-0 place-items-center"><input id="${id}" name="${name}" type="radio" ${on ? 'checked' : ''} class="peer col-start-1 row-start-1 h-[13px] w-[13px] appearance-none rounded-full border border-[#333] bg-white">${bullet}</span>`;
const sub = s => s.replace(/_(\S+)/, '<sub class="-bottom-px text-[9px]">$1</sub>');

/* Tree rows: [level, expander, control, icon, label] */
const pads = ['pl-1', 'pl-6', 'pl-11'];
const expander = { '+': '<path d="m3 1 4 4-4 4" fill="none" stroke="#999" stroke-width="1.500"/>', '-': '<path d="m1 3 4 4 4-4" fill="none" stroke="#333" stroke-width="1.500"/>', '': '' };
let uid = 0;
const row = ([lv, ex, ctl, ic, text, mark]) => {
  const id = 'n' + (++uid);
  const control = ctl[0] === 'r' ? radio(id, ctl.slice(0, 2), ctl[2] === '1') : box(id, ctl === 'c1', ctl === 'cb');
  return `<div role="treeitem" class="relative flex h-[18px] items-center ${pads[lv]}">
    <svg class="h-2.5 w-2.5 shrink-0" viewBox="0 0 10 10">${expander[ex]}</svg>
    <span class="-mt-px ml-[7px]">${control}</span><span class="ml-[5px]">${svg16(ic)}</span>
    <label for="${id}" class="ml-1 whitespace-nowrap pt-0.5">${sub(text)}</label>
    ${mark ? '<span class="pointer-events-none absolute -top-1 left-12 h-[25px] w-[107px] border-2 border-[#ed1c24]"></span>' : ''}</div>`;
};
$('tree1').innerHTML = [
  [0, '-', 'c0', 'defo', 'Globální deformace'],
  [1, '', 'ra1', 'defo', '|u|'], [1, '', 'ra0', 'defo', 'u_X'], [1, '', 'ra0', 'defo', 'u_Y'], [1, '', 'ra0', 'defo', 'u_Z'],
  [1, '', 'ra0', 'defo', 'φ_X'], [1, '', 'ra0', 'defo', 'φ_Y'], [1, '', 'ra0', 'defo', 'φ_Z'],
  [0, '+', 'c0', 'rainbow', 'Plochy'],
  [0, '-', 'c1', 'react', 'Podporové reakce'],
  [1, '-', 'c1', 'linesupp', 'Liniové podpory'],
  [2, '', 'rb1', 'linesupp', 'Lokální', true], [2, '', 'rb0', 'linesupp', 'Globální'],
  [2, '', 'c1', 'linesupp', 'p_x'], [2, '', 'c1', 'linesupp', 'p_y'], [2, '', 'c1', 'linesupp', 'p_z'],
  [2, '', 'c0', 'linesupp', 'm_x'], [2, '', 'c0', 'linesupp', 'm_y'], [2, '', 'c0', 'linesupp', 'm_z'],
  [1, '+', 'c0', 'react', 'Výslednice'],
  [0, '+', 'c0', 'defo', 'Průběh zatížení'],
  [0, '-', 'c0', 'flag', 'Hodnoty na plochách'],
  [1, '', 'rc1', 'flag', 'Aktuální výběr: prázdný'], [1, '+', 'rc0', 'flag', 'Skupiny'], [1, '+', 'rc0', 'flag', 'Cíleně'],
].map(row).join('');
$('tree2').innerHTML = [
  [0, '+', 'c1', 'diagxxx', 'Výsledky'], [0, '', 'c1', 'diageye', 'Informace v záhlaví'], [0, '', 'c1', 'diageye', 'Informace o max./min. hodnotách'],
  [0, '+', 'cb', 'diageye', 'Deformace'], [0, '+', 'cb', 'diageye', 'Linie'], [0, '+', 'cb', 'diageye', 'Pruty'],
  [0, '+', 'cb', 'diageye', 'Plochy'], [0, '+', 'cb', 'diageye', 'Hodnoty na plochách'], [0, '+', 'cb', 'heat', 'Typ zobrazení'],
  [0, '+', 'c1', 'diageye', 'Žebra - spolupůsobící na ploše/prutu'], [0, '+', 'cb', 'diageye', 'Podporové reakce'], [0, '+', 'cb', 'diageye', 'Výsledkové řezy'],
].map(row).join('');

/* Support dialogs */
const spin = (label, val, off) => `<span class="flex h-5 w-[90px] items-center ${off ? 'bg-[#e5e5e5]' : 'bg-[#e7e7f2]'}">
  <input type="text" aria-label="${label}" value="${val}" ${off ? 'disabled' : ''} class="w-[60px] bg-transparent text-right">
  <svg class="ml-2 h-3 w-[18px]" viewBox="0 0 18 12"><path d="M1 4h5L3.500 1zM1 8h5L3.500 11zM13 2v8l4-4z" fill="${off ? '#a0a0a0' : '#333'}"/></svg></span>`;
const sup = s => s.replace(/\^(-?\d)/g, '<sup class="-top-1 text-[9px]">$1</sup>');
const dofRow = (p, [sym, C, on, val, unit, off]) => {
  const id = p + sym;
  return `<div class="flex h-[26px] items-center">
    ${box(id, on, false)}<label for="${id}" class="ml-1.5 w-[71px]">${sub(sym)}</label>
    <span class="w-[30px] ${off ? 'text-[#8a8a8a]' : 'text-black'}">${sub(C)}</span>${spin(C.replace('_', ' '), val, off)}
    <span class="ml-[5px] w-[110px] ${off ? 'text-[#8a8a8a]' : 'text-black'}">${sup(unit)}</span>
    <span class="grid h-[21px] w-14 items-center bg-[#e7e7f2]"><select aria-label="Nelinearita ${sym.replace('_', ' ')}" class="col-start-1 row-start-1 w-full appearance-none bg-transparent pl-[5px]"><option>Žádná</option></select>${chevron('#555')}</span></div>`;
};
const dialog = (p, d) => `<section class="w-[403px] bg-[#ebebeb]">
  <div class="flex h-[22px] bg-[#d0d0d4]"><button role="tab" class="w-[94px] bg-[#ebebeb] pt-1">Základní údaje</button></div>
  <div class="flex gap-2.5 pl-[9px] pt-[9px]">
    <div class="h-[47px] w-[191px] bg-white px-[5px] pt-px"><h3 class="font-semibold text-[#5f7096]">Souřadný systém</h3>
      <div class="relative mt-[5px] grid h-[21px] items-center bg-[#e7e7f2] ${d.under}"><select aria-label="Souřadný systém" class="col-start-1 row-start-1 w-full appearance-none bg-transparent pl-[5px]"><option>${d.system}</option></select>${chevron('#444')}
        <span class="${d.ring}"></span></div></div>
    <div class="flex h-[47px] w-[190px] items-center bg-white pb-0 pl-[5px] pt-1"><span class="w-5 ${d.beta ? 'text-black' : 'text-[#777]'}">β</span>${spin('β', d.beta, !d.beta)}<span class="ml-[5px] ${d.beta ? 'text-black' : 'text-[#777]'}">[deg]</span></div>
  </div>
  <div class="ml-[9px] mt-2.5 h-[234px] w-[391px] bg-white pl-[5px] pt-px">
    <h3 class="font-semibold text-[#5f7096]">Podporové podmínky</h3>
    <div class="mt-2.5 flex h-4"><span class="w-[90px]">Posun</span><span class="w-[235px]">Tuhost</span><span>Nelinearita</span></div>
    ${d.rows.slice(0, 3).map(r => dofRow(p, r)).join('')}
    <div class="mt-3.5 flex h-4"><span class="w-[90px]">Natočení</span><span>Tuhost</span></div>
    ${d.rows.slice(3).map(r => dofRow(p, r)).join('')}
  </div></section>`;
const F = '[kN/m^2]', M = '[kNm·rad^-1·m^-1]';
const rows = (x, y, z) => [
  [`u_${x}`, `C_u,${x}`, 1, '', F, 1], [`u_${y}`, `C_u,${y}`, 1, '', F, 1], [`u_${z}`, `C_u,${z}`, 1, '', F, 1],
  [`φ_${x}`, `C_φ,${x}`, 1, '', M, 1], [`φ_${y}`, `C_φ,${y}`, 0, '0.000', M, 0], [`φ_${z}`, `C_φ,${z}`, 0, '0.000', M, 0]];

/* Model view */
const range = n => [...Array(n).keys()];
const person = (x, y, r) => `<g transform="translate(${x} ${y}) rotate(${r})"><path d="M-5 15h10v13H-5z" fill="#36ea36"/><path d="M-5 9.500H5L11 17H-11z" fill="#40ff40"/><circle cy="5.500" r="5.500" fill="#40ff40"/><path d="M-5 5H5v6H-5z" fill="#40ff40"/><path d="M0 6l4 6h-8z" fill="#12ee12"/></g>`;
const plate = x => `<path d="M${x} 240 ${x+290} 153V442.500L${x} 529.500z" fill="url(#steel)" stroke="#666"/><path d="M${x} 529.500 ${x+290} 442.500" stroke="#20e820" stroke-width="1.300"/>` +
  [[0, 240], [290, 153], [290, 442.500], [0, 529.500]].map(([a, b]) => `<circle cx="${x+a}" cy="${b}" r="2.200" fill="#f00"/>`).join('');
const band = (top, bot) => `<path d="M${top.concat([...bot].reverse()).map(p => p.join(' ')).join('L')}z" fill="#f0f6f0" stroke="#3a823a"/>` +
  top.map(([x, y], i) => { const [a, b] = bot[i], r = Math.atan2(x - a, b - y) * 57.3; return `<path d="M${a} ${b}L${x} ${y}" stroke="#0a6a0a"/><path transform="translate(${x} ${y}) rotate(${r})" d="M0 1l3.500 8h-7z" fill="#007a00"/>`; }).join('');
const top1 = range(9).map(i => [363.500 + 36.250 * i, 587.500 - 10.800 * i]);
const bot1 = [602.500, 593, 581.500, 570.700, 559.700, 549, 538, 527, 514.500].map((y, i) => [363.500 + 36.250 * i, y]);
const top2 = range(9).map(i => [815.500 + 36.250 * i, 585 - 10.830 * i]);
const bot2 = [596.700, 589.700, 578, 567, 556, 545, 534, 523, 512.300].map((y, i) => [819.500 + 36.250 * i, y]);
$('canvas').innerHTML = `
<svg class="absolute left-0 top-0 h-[919px] w-[1101px]" viewBox="299 107 1101 919" fill="none">
  <defs><linearGradient id="steel" x2="1" y2="1"><stop stop-color="#d6d6d6"/><stop offset=".5" stop-color="#d1d1d1"/><stop offset="1" stop-color="#d5d5d5"/></linearGradient></defs>
  ${plate(363.500)}${plate(798.500)}
  ${range(6).map(i => person(388 + 48.300 * i, 523 - 14.500 * i, 0)).join('')}
  ${range(6).map(i => person(823.500 + 48.400 * i, 522.500 - 14.500 * i, -13)).join('')}
  ${band(top1, bot1)}${band(top2, bot2)}
  <g fill="#0a5a0a" font-size="11"><text x="387" y="606">4.989</text><text x="640" y="527">4.187</text><text x="805" y="610">3.810</text><text x="843" y="603">4.990</text></g>
  <path d="M358 967l20-5" stroke="#f00" stroke-width="3"/><path d="M385 960l-9-2 2 7z" fill="#d00"/>
  <path d="M358 967l22 5" stroke="#0b0" stroke-width="3"/><path d="M388 973l-9-5-1 7z" fill="#080"/>
  <path d="M358 967v30" stroke="#001080" stroke-width="3"/><path d="M358 1005l-3-11h6z" fill="#001080"/><circle cx="358" cy="967" r="3.500" fill="#f0e000"/>
  <g font-size="11"><text x="388" y="961" fill="#f00">X</text><text x="392" y="979" fill="#0b0">Y</text><text x="355" y="1019" fill="#001080">Z</text></g>
</svg>
<svg class="absolute right-4 top-5 h-[96px] w-[102px]" viewBox="1281 127 102 96">
  <path d="M1282 142.500 1328 128.500 1379.500 141 1334.500 155z" fill="#8a8a8a"/><path d="M1282 142.500 1334.500 155V221L1282 209z" fill="#bdbdbd"/><path d="M1334.500 155 1379.500 141V208L1334.500 221z" fill="#b2b2b2"/>
  <path d="M1282 142.500 1328 128.500 1379.500 141 1334.500 155zM1334.500 155V221M1282 142.500V209L1334.500 221 1379.500 208V141M1295.500 146v66M1321 152v66M1346 152v66M1368 145v66M1282 161l52.500 11 45-14M1282 193l52.500 11 45-13M1295.500 146l46-14M1321 152l46-14M1297 138l51 13M1316 132l52 13" fill="none" stroke="#7b7474" stroke-width="1.800"/>
  <g font-family="Roboto" font-size="14" font-weight="700"><text x="1301" y="189" fill="#dd4848">+X</text><text x="1350" y="187" fill="#48a850">-Y</text></g><text x="1328" y="146" font-size="8" font-weight="700" fill="#33337a">-Z</text>
</svg>
<div class="absolute left-[40px] top-[511px] h-[339px] w-[423px] border-5 border-[#ed1c24] bg-white pt-px">${dialog('a', { system: 'Globální XYZ', beta: '', under: '', ring: 'pointer-events-none absolute -left-[5px] -top-[3px] h-7 w-[139px] border-5 border-[#ed1c24]', rows: rows('X', 'Y', 'Z') })}</div>
<div class="absolute left-[494px] top-[515px] bg-[#d0d0d4] pt-1.5">${dialog('b', { system: 'Lokální xyz', beta: '0.00', under: 'border-b-2 border-[#5f63b0]', ring: 'pointer-events-none absolute -left-0.5 -top-[3px] h-7 w-[164px] border-5 border-[#3f48cc]', rows: rows('x', 'y', 'z') })}</div>
<div class="pointer-events-none absolute left-[489px] top-[514px] h-[338px] w-[404px] border-5 border-[#3f48cc]"></div>`;
</script>
</body>
</html>
